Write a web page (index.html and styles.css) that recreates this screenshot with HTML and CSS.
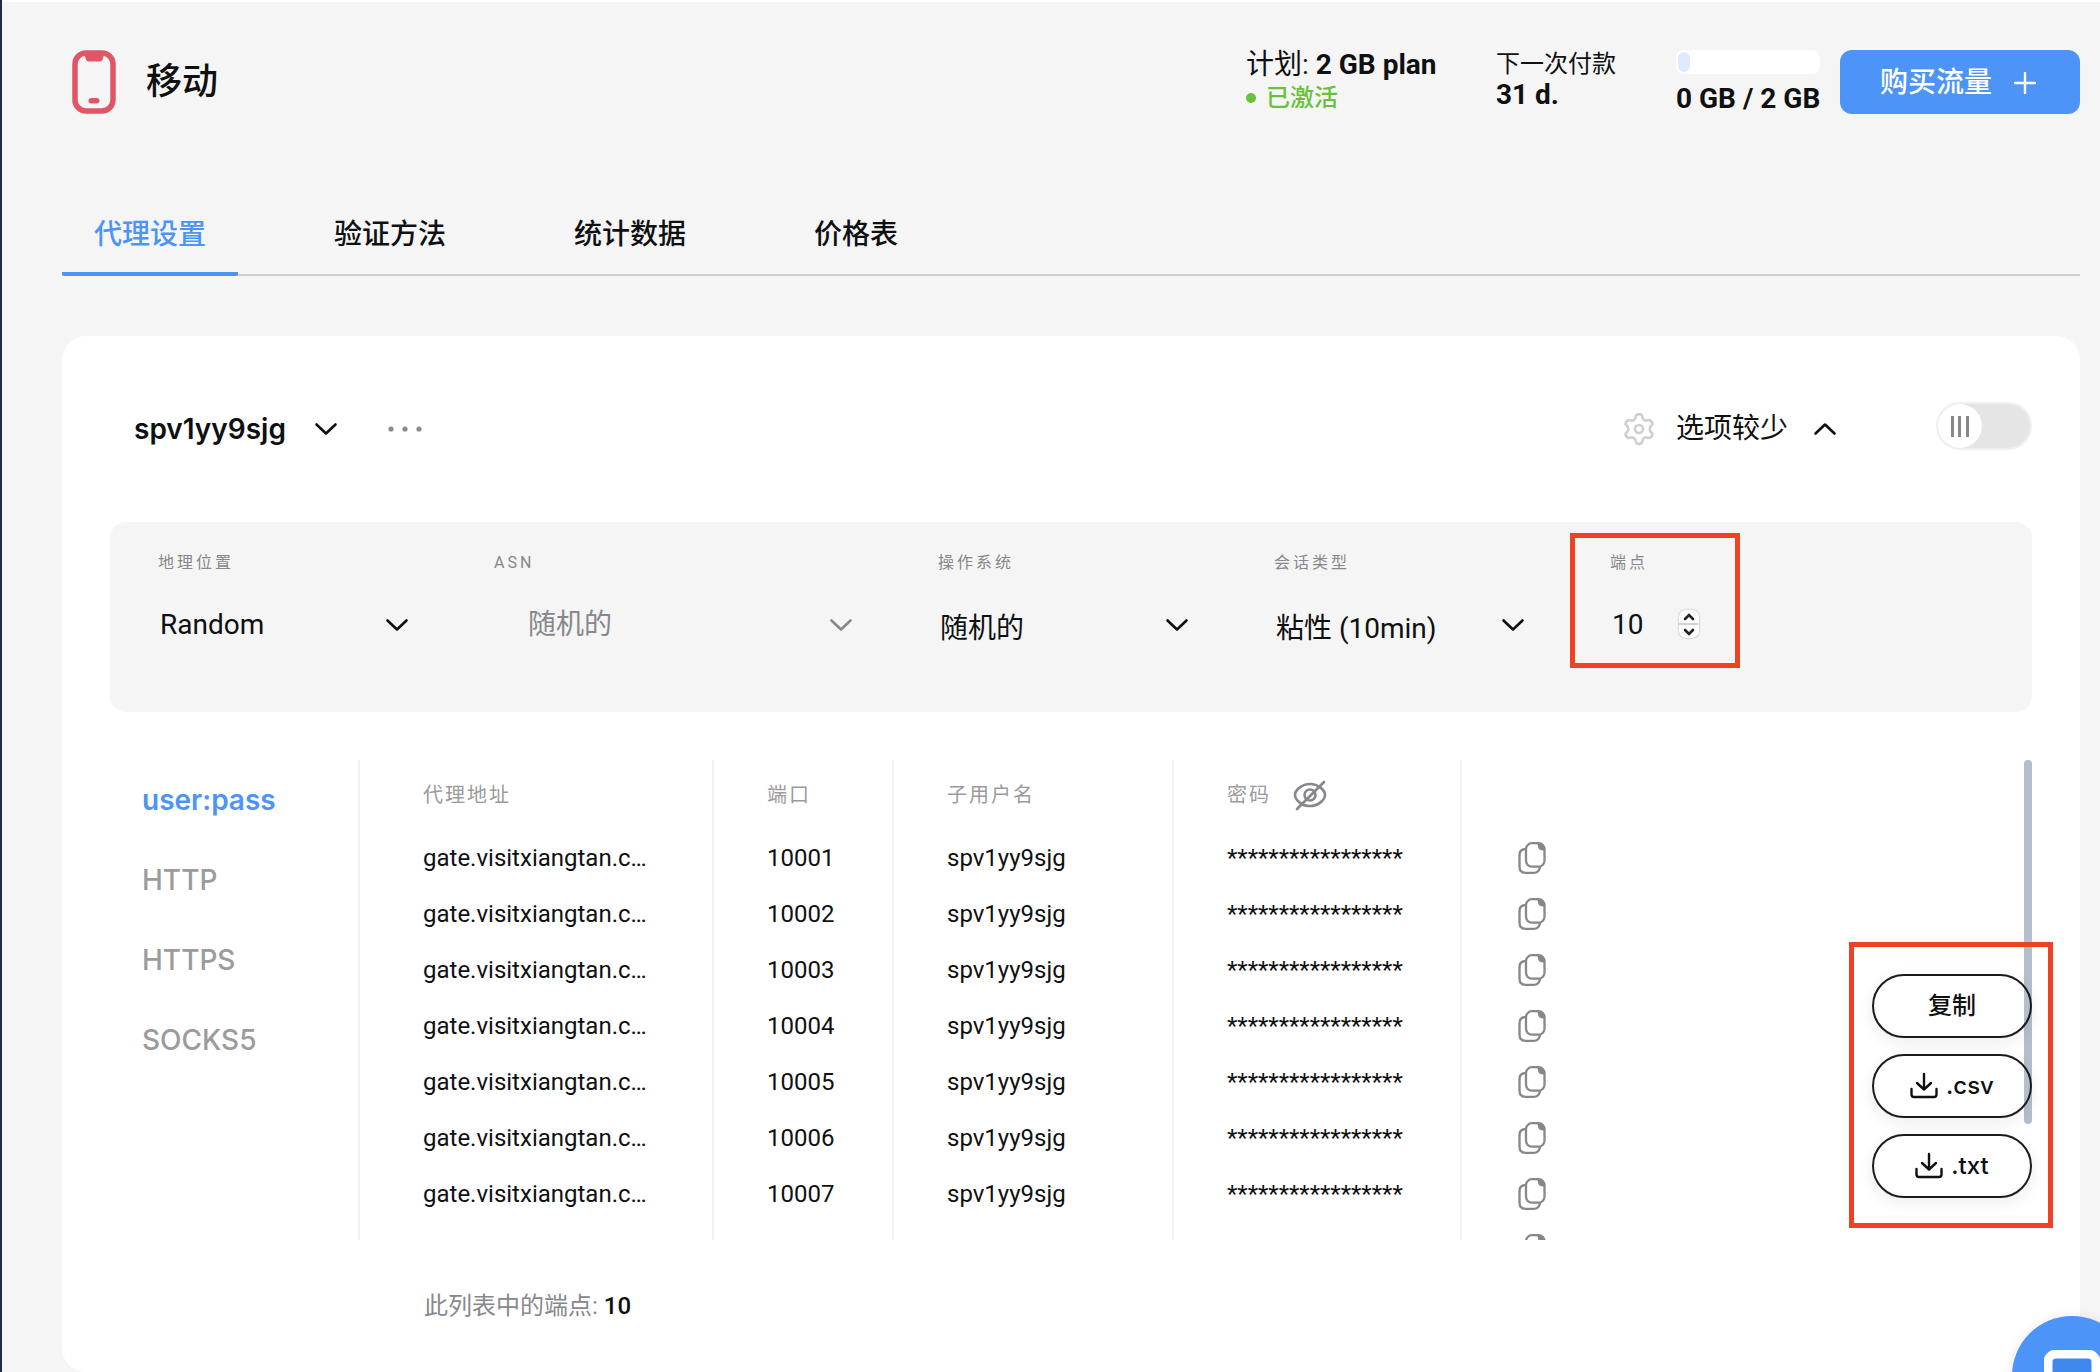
FILE: index.html
```html
<!DOCTYPE html>
<html lang="zh-CN">
<head>
<meta charset="utf-8">
<meta name="viewport" content="width=device-width, initial-scale=1">
<title>移动</title>
<link rel="stylesheet" href="styles.css">
</head>
<body>
<svg class="sprite" aria-hidden="true">
  <symbol id="chevron" viewBox="0 0 24 14"><path d="M2.500 2.500 12 11.500l9.500-9" fill="none" stroke="currentColor" stroke-width="2.600" stroke-linecap="round" stroke-linejoin="round"/></symbol>
  <symbol id="copy" viewBox="0 0 28 32"><g fill="none" stroke="currentColor" stroke-width="2.300"><rect x="8" y="1.200" width="18.500" height="23.500" rx="6"/><path d="M8 7C4 7 1.500 9 1.500 13v12c0 4 2 5.800 6 5.800h8c4 0 6-2 6.500-6"/></g><path d="M19 1h2c3 0 6 3 6 6v1.500h-2c-3 0-5-1.500-5-4.500z" fill="currentColor"/></symbol>
  <symbol id="download" viewBox="0 0 28 28"><path d="M14 2v15M7 11l7 6.500 7-6.500M1.500 17v5.500q0 2.500 2.500 2.500h20q2.500 0 2.500-2.500V17" fill="none" stroke="currentColor" stroke-width="2.400" stroke-linecap="round" stroke-linejoin="round"/></symbol>
</svg>
<main class="page">
  <header class="top">
    <svg class="phone" viewBox="0 0 44 64" aria-hidden="true"><rect x="3" y="3" width="38" height="58" rx="11" fill="none" stroke="#e15666" stroke-width="5.500"/><path d="M10 2h24v3c-2 0-2.500 1-3 3-.5 2-1 3.500-3 3.500H17c-2.500 0-3-2-3.500-3.500-.5-2-1-3-3.500-3z" fill="#e15666"/><rect x="16.500" y="48" width="11" height="5.500" rx="2.700" fill="#e15666"/></svg>
    <h1 class="title">移动</h1>
    <div class="plan">
      <div class="plan-name">计划: <strong>2 GB plan</strong></div>
      <div class="status">已激活</div>
    </div>
    <div class="payment">
      <div class="payment-label">下一次付款</div>
      <strong class="payment-days">31 d.</strong>
    </div>
    <div class="usage">
      <div class="meter"><div class="meter-fill"></div></div>
      <strong>0 GB / 2 GB</strong>
    </div>
    <button class="buy" type="button">购买流量
      <svg class="plus" viewBox="0 0 22 22" aria-hidden="true"><path d="M11 1v20M1 11h20" stroke="#fff" stroke-width="2.400" stroke-linecap="round"/></svg>
    </button>
  </header>

  <nav class="tabs">
    <a class="tab active" href="#setup">代理设置</a>
    <a class="tab" href="#auth">验证方法</a>
    <a class="tab" href="#stats">统计数据</a>
    <a class="tab" href="#pricing">价格表</a>
  </nav>

  <section class="card">
    <div class="card-head">
      <button class="user" type="button">spv1yy9sjg <svg class="chevron"><use href="#chevron"/></svg></button>
      <button class="more" type="button" aria-label="更多"><svg viewBox="0 0 36 8" width="36" height="8"><circle cx="4" cy="4" r="2.600"/><circle cx="18" cy="4" r="2.600"/><circle cx="32" cy="4" r="2.600"/></svg></button>
      <button class="options" type="button">
        <svg class="gear" viewBox="0 0 30 34" aria-hidden="true"><g fill="none" stroke="#cfcfcf" stroke-width="2.600" stroke-linejoin="round"><path d="M12 3.500Q15 .5 18 3.500L18.800 6.500Q20 9 22.500 8.600L25 8Q28 8.500 28.500 12L26.500 14.500Q25 17 26.500 19.500L28.500 22Q28 25.500 25 26L22.500 25.400Q20 25 18.800 27.500L18 30.500Q15 33.500 12 30.500L11.200 27.500Q10 25 7.500 25.400L5 26Q2 25.500 1.500 22L3.500 19.500Q5 17 3.500 14.500L1.500 12Q2 8.500 5 8L7.500 8.600Q10 9 11.200 6.500Z"/><circle cx="15" cy="17" r="4"/></g></svg>
        选项较少
        <svg class="chevron up"><use href="#chevron"/></svg>
      </button>
      <input class="toggle" type="checkbox" aria-label="启用">
    </div>

    <div class="filters">
      <div class="field">
        <label for="geo">地理位置</label>
        <div class="pick"><select id="geo"><option>Random</option></select><svg class="chevron"><use href="#chevron"/></svg></div>
      </div>
      <div class="field muted">
        <label for="asn">ASN</label>
        <div class="pick"><select id="asn" disabled><option>随机的</option></select><svg class="chevron"><use href="#chevron"/></svg></div>
      </div>
      <div class="field low">
        <label for="os">操作系统</label>
        <div class="pick"><select id="os"><option>随机的</option></select><svg class="chevron"><use href="#chevron"/></svg></div>
      </div>
      <div class="field low">
        <label for="session">会话类型</label>
        <div class="pick"><select id="session"><option>粘性 (10min)</option></select><svg class="chevron"><use href="#chevron"/></svg></div>
      </div>
      <div class="field marked">
        <label for="count">端点</label>
        <div class="count">
          <input id="count" type="number" value="10">
          <div class="stepper">
            <button type="button" aria-label="增加"><svg viewBox="0 0 12 8"><path d="M2 6l4-4 4 4"/></svg></button>
            <button type="button" aria-label="减少"><svg viewBox="0 0 12 8"><path d="M2 2l4 4 4-4"/></svg></button>
          </div>
        </div>
      </div>
    </div>

    <div class="results">
      <nav class="protocols">
        <a class="active" href="#userpass">user:pass</a>
        <a href="#http">HTTP</a>
        <a href="#https">HTTPS</a>
        <a href="#socks5">SOCKS5</a>
      </nav>
      <div class="endpoints">
        <table>
          <thead>
            <tr><th class="address">代理地址</th><th class="port">端口</th><th class="name">子用户名</th>
            <th class="password"><div class="password-head">密码
              <button class="icon-button" type="button" aria-label="显示密码"><svg width="34" height="32" viewBox="0 0 34 32"><g fill="none" stroke="currentColor" stroke-width="2.600" stroke-linecap="round"><path d="M2 16C2 11 9 5 17 5s15 6 15 11-7 11-15 11S2 21 2 16z"/><circle cx="17" cy="16" r="5.500"/><path d="M4 30 31 3"/></g></svg></button></div></th>
            <th class="copy"></th></tr>
          </thead>
          <tbody>
            <tr><td>gate.visitxiangtan.c…</td><td>10001</td><td>spv1yy9sjg</td><td>*****************</td><td><button class="icon-button" type="button" aria-label="复制"><svg width="28" height="32"><use href="#copy"/></svg></button></td></tr>
            <tr><td>gate.visitxiangtan.c…</td><td>10002</td><td>spv1yy9sjg</td><td>*****************</td><td><button class="icon-button" type="button" aria-label="复制"><svg width="28" height="32"><use href="#copy"/></svg></button></td></tr>
            <tr><td>gate.visitxiangtan.c…</td><td>10003</td><td>spv1yy9sjg</td><td>*****************</td><td><button class="icon-button" type="button" aria-label="复制"><svg width="28" height="32"><use href="#copy"/></svg></button></td></tr>
            <tr><td>gate.visitxiangtan.c…</td><td>10004</td><td>spv1yy9sjg</td><td>*****************</td><td><button class="icon-button" type="button" aria-label="复制"><svg width="28" height="32"><use href="#copy"/></svg></button></td></tr>
            <tr><td>gate.visitxiangtan.c…</td><td>10005</td><td>spv1yy9sjg</td><td>*****************</td><td><button class="icon-button" type="button" aria-label="复制"><svg width="28" height="32"><use href="#copy"/></svg></button></td></tr>
            <tr><td>gate.visitxiangtan.c…</td><td>10006</td><td>spv1yy9sjg</td><td>*****************</td><td><button class="icon-button" type="button" aria-label="复制"><svg width="28" height="32"><use href="#copy"/></svg></button></td></tr>
            <tr><td>gate.visitxiangtan.c…</td><td>10007</td><td>spv1yy9sjg</td><td>*****************</td><td><button class="icon-button" type="button" aria-label="复制"><svg width="28" height="32"><use href="#copy"/></svg></button></td></tr>
            <tr><td></td><td></td><td></td><td></td><td><button class="icon-button" type="button" aria-label="复制"><svg width="28" height="32"><use href="#copy"/></svg></button></td></tr>
          </tbody>
        </table>
      </div>
      <div class="scroll-thumb"></div>
      <div class="actions">
        <button type="button">复制</button>
        <button type="button"><svg width="28" height="28"><use href="#download"/></svg>.csv</button>
        <button type="button"><svg width="28" height="28"><use href="#download"/></svg>.txt</button>
      </div>
    </div>
    <p class="summary">此列表中的端点: <b>10</b></p>
  </section>
</main>
<button class="chat" type="button" aria-label="聊天"><svg width="56" height="56" viewBox="0 0 56 56"><rect x="4" y="4" width="48" height="48" rx="8" fill="#3f88ee" stroke="#fff" stroke-width="9"/></svg></button>
</body>
</html>
```

FILE: styles.css
```css
*, ::before, ::after { box-sizing: border-box; }

body {
  margin: 0;
  border-left: 2px solid #1f2a40;
  background: #f5f5f5;
  color: #0f1011;
  font-family: Roboto, "Noto Sans CJK SC", sans-serif;
  font-size: 24px;
  line-height: 32px;
}

button, input, select { font: inherit; color: inherit; }
button { padding: 0; border: 0; background: none; cursor: pointer; }
a { color: inherit; text-decoration: none; }
svg { display: block; flex: none; }

.sprite { position: absolute; width: 0; height: 0; }

.page {
  padding: 48px 20px 0 60px;
  border-top: 2px solid #fff;
}

/* Header */
.top { display: flex; height: 64px; }
.phone { width: 44px; height: 64px; margin-left: 10px; }
.title {
  margin: 0 auto 0 30px;
  font-size: 36px;
  font-weight: 500;
  line-height: 64px;
}
.top strong { font-size: 28px; font-weight: 700; }
.plan { width: 190px; margin-right: 60px; white-space: nowrap; }
.plan-name { font-size: 28px; line-height: 30px; }
.plan .status {
  display: flex;
  align-items: center;
  gap: 10px;
  line-height: 36px;
  color: #67c23a;
  font-weight: 500;
}
.status::before {
  content: "";
  width: 10px;
  height: 10px;
  border-radius: 50%;
  background: #67c23a;
}
.payment { width: 120px; margin-right: 60px; }
.payment-label { line-height: 28px; white-space: nowrap; }
.payment-days { display: block; line-height: 34px; }
.usage { width: 144px; margin-right: 20px; white-space: nowrap; }
.meter {
  height: 24px;
  margin-bottom: 8px;
  padding: 2px;
  border-radius: 8px;
  background: #fff;
}
.meter-fill { width: 12px; height: 20px; border-radius: 6px; background: #deeaff; }
.usage strong { display: block; line-height: 34px; }
.buy {
  display: flex;
  align-items: center;
  justify-content: center;
  gap: 22px;
  width: 240px;
  padding: 2px 4px 0 0;
  border-radius: 12px;
  background: #4c94f8;
  color: #fff;
  font-size: 28px;
  font-weight: 500;
}
.plus { width: 22px; height: 22px; }

/* Tabs */
.tabs {
  display: flex;
  gap: 64px;
  margin-top: 80px;
  border-bottom: 2px solid #cdcdcd;
}
.tab {
  height: 82px;
  margin-bottom: -2px;
  padding: 0 32px;
  border-radius: 2px;
  font-size: 28px;
  font-weight: 500;
  line-height: 82px;
}
.tab.active { border-bottom: 4px solid #4c94f8; color: #4c94f8; }

/* Card */
.card {
  margin-top: 60px;
  padding: 66px 48px 50px;
  border-radius: 24px;
  background: #fff;
}
.card-head { display: flex; align-items: center; padding-left: 24px; }
.chevron { width: 24px; height: 14px; }
.chevron.up { transform: rotate(180deg); }
.user, .more, .options { padding-top: 6px; }
.user {
  display: flex;
  align-items: center;
  gap: 28px;
  font-family: Inter, sans-serif;
  font-size: 28px;
  font-weight: 600;
}
.more { margin-left: 49px; fill: #8a8a8f; }
.options {
  display: flex;
  align-items: center;
  gap: 22px;
  margin-left: auto;
  font-size: 28px;
}
.options .chevron { margin-left: 3px; }
.gear { width: 30px; height: 34px; }
.toggle {
  appearance: none;
  width: 96px;
  height: 48px;
  margin: 0 0 0 99px;
  border: 2px solid #f0f0f0;
  border-radius: 24px;
  background: #e5e5e5;
}
.toggle::before {
  content: "";
  display: block;
  width: 44px;
  height: 44px;
  border-radius: 50%;
  background:
    linear-gradient(#87878c, #87878c) 13px 12px / 3px 21px no-repeat,
    linear-gradient(#87878c, #87878c) 20px 12px / 3px 21px no-repeat,
    linear-gradient(#87878c, #87878c) 28px 12px / 3px 21px no-repeat,
    #fff;
}

/* Filters */
.filters {
  display: grid;
  grid-template-columns: 256fr 364fr 256fr 256fr 374fr;
  gap: 80px;
  margin-top: 72px;
  padding: 31px 48px 67px;
  border-radius: 16px;
  background: #f5f5f5;
}
.field { display: flex; flex-direction: column; gap: 32px; min-width: 0; }
.field label {
  color: #87878c;
  font-size: 16px;
  letter-spacing: 3px;
  line-height: 20px;
}
.pick { display: flex; align-items: center; padding-right: 5px; }
.pick select {
  flex: 1;
  min-width: 0;
  height: 40px;
  padding: 0 0 0 2px;
  border: 0;
  background: none;
  appearance: none;
  font-size: 28px;
  opacity: 1;
}
.low .pick select { padding-top: 8px; }
.muted .pick { color: #87878c; }
.muted .pick select { padding-left: 34px; }
.count { display: flex; align-items: center; }
.count input {
  appearance: textfield;
  width: 69px;
  height: 38px;
  padding: 0 0 0 2px;
  border: 0;
  background: none;
  font-size: 28px;
}
.count input::-webkit-inner-spin-button { appearance: none; }
.stepper {
  display: grid;
  gap: 2px;
  width: 20px;
  height: 28px;
  overflow: hidden;
  border-radius: 7px;
  background: #d4d4d4;
  box-shadow: 0 0 2px #999;
}
.stepper button { display: grid; place-items: center; background: #fff; }
.stepper svg {
  width: 12px;
  height: 8px;
  fill: none;
  stroke: #222;
  stroke-width: 2.600;
  stroke-linecap: round;
}
.marked { position: relative; }
.marked::after {
  content: "";
  position: absolute;
  top: -20px;
  left: -40px;
  width: 170px;
  height: 135px;
  border: 5px solid #ee4126;
  pointer-events: none;
}

/* Results */
.results {
  position: relative;
  display: grid;
  grid-template-columns: 248px 1fr;
  height: 480px;
  margin-top: 48px;
}
.protocols {
  display: flex;
  flex-direction: column;
  gap: 48px;
  padding: 24px 0 0 32px;
  color: #9b9b9b;
  font-family: Inter, sans-serif;
  font-size: 28px;
  font-weight: 500;
}
.protocols .active { color: #4c94f8; font-weight: 600; }
.endpoints { overflow: hidden; }
table { width: 100%; border-collapse: collapse; table-layout: fixed; }
th, td {
  height: 56px;
  padding: 0 0 0 53px;
  border-left: 2px solid #f2f2f2;
  text-align: left;
  white-space: nowrap;
}
th:first-child, td:first-child { padding-left: 63px; }
td:last-child { padding-left: 56px; }
th {
  height: 70px;
  color: #9b9b9b;
  font-size: 20px;
  font-weight: 400;
  letter-spacing: 2px;
}
.address { width: 354px; }
.port { width: 180px; }
.name { width: 280px; }
.password { width: 288px; }
.password-head { display: flex; align-items: center; gap: 22px; }
.icon-button { display: block; color: #87878c; }
.scroll-thumb {
  position: absolute;
  top: 0;
  right: 0;
  width: 8px;
  height: 364px;
  border-radius: 4px;
  background: #b3bfcc;
}
.actions {
  position: absolute;
  top: 214px;
  right: 0;
  display: grid;
  gap: 16px;
}
.actions::before {
  content: "";
  position: absolute;
  inset: -32px -21px -30px -23px;
  border: 5px solid #ee4126;
  pointer-events: none;
}
.actions button {
  display: flex;
  align-items: center;
  justify-content: center;
  gap: 8px;
  width: 160px;
  height: 64px;
  border: 2px solid #1b1b1b;
  border-radius: 32px;
  box-shadow: 0 4px 16px rgb(0 0 0 / 8%);
  font-family: Inter, "Noto Sans CJK SC", sans-serif;
  font-weight: 500;
}
.summary { margin: 50px 0 0 314px; color: #87878c; }
.summary b { color: #0f1011; font-weight: 500; }

.chat {
  position: fixed;
  right: -32px;
  bottom: -64px;
  width: 120px;
  height: 120px;
  padding: 34px 0 0 32px;
  border-radius: 50%;
  background: #4c94f8;
  box-shadow: 0 2px 12px rgb(0 0 0 / 12%);
}
.chat svg { margin-bottom: 30px; }
```
